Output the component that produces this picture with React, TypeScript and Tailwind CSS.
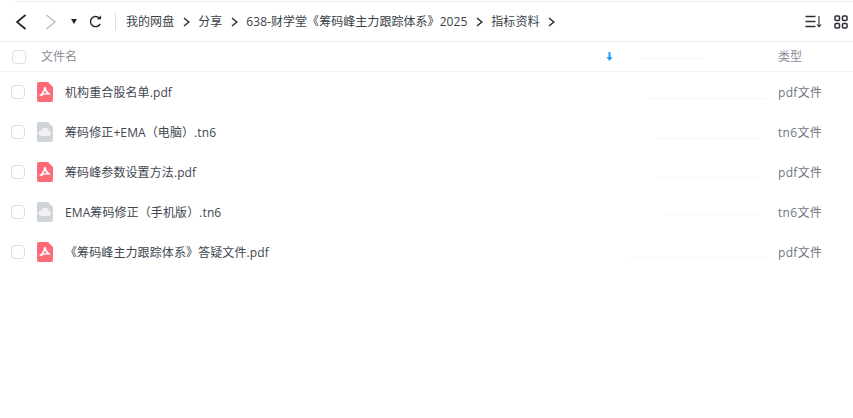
const FONT = "font-['Open_Sans','Noto_Sans_CJK_SC',sans-serif]";

type FileRow = { name: string; kind: "pdf" | "tn6"; smudge: string };

const FILES: FileRow[] = [
  { name: "机构重合股名单.pdf", kind: "pdf", smudge: "w-[118px] ml-[648px] top-[26px]" },
  { name: "筹码修正+EMA（电脑）.tn6", kind: "tn6", smudge: "w-[104px] ml-[656px] top-[26px]" },
  { name: "筹码峰参数设置方法.pdf", kind: "pdf", smudge: "w-[104px] ml-[656px] top-[25px]" },
  { name: "EMA筹码修正（手机版）.tn6", kind: "tn6", smudge: "w-[96px] ml-[664px] top-[22px]" },
  { name: "《筹码峰主力跟踪体系》答疑文件.pdf", kind: "pdf", smudge: "w-[138px] ml-[630px] top-[25px]" },
];

function PdfIcon() {
  return (
    <svg width="16" height="20" viewBox="0 0 16 20" className="block">
      <path d="M2 0h9l5 5v13a2 2 0 0 1-2 2H2a2 2 0 0 1-2-2V2a2 2 0 0 1 2-2z" fill="#fd6a7a" />
      <path
        d="M7.800 5.500c.6 2.800 1.800 4.800 4.200 6.500M7.800 5.500c-.2 3-1.500 5.500-4.500 8M4 13.300c2.500-1.500 5-2 8.500-1.300"
        fill="none"
        stroke="#fff"
        strokeWidth="1.600"
        strokeLinecap="round"
      />
    </svg>
  );
}

function CloudFileIcon() {
  return (
    <svg width="16" height="20" viewBox="0 0 16 20" className="block">
      <path d="M2 0h9l5 5v13a2 2 0 0 1-2 2H2a2 2 0 0 1-2-2V2a2 2 0 0 1 2-2z" fill="#cfd3da" />
      <path
        d="M4.500 14a2.600 2.600 0 0 1-.4-5.200 4 4 0 0 1 7.700-.1 2.700 2.700 0 0 1 .2 5.300z"
        fill="#f1f2f4"
      />
    </svg>
  );
}

function Chevron() {
  return (
    <svg width="7" height="10" viewBox="0 0 7 10" className="mx-[8.500px]" fill="none" stroke="#2b2f36" strokeWidth="1.500">
      <path d="M1 1l4.800 4L1 9" />
    </svg>
  );
}

function Checkbox() {
  return <span className="block w-[14px] h-[14px] rounded-[4px] border border-[#dcdfe3] bg-white shrink-0" />;
}

export default function App() {
  const crumbs = ["我的网盘", "分享", "638-财学堂《筹码峰主力跟踪体系》2025", "指标资料"];

  return (
    <div className={`${FONT} w-[853px] h-[418px] bg-white overflow-hidden text-[#3f4550]`}>
      <div className="ml-[15px] h-[1px] mt-[1px] bg-[#eeeeee]" />

      {/* Toolbar */}
      <div className="h-[39px] flex items-center border-b border-[#eeeeee] box-content">
        <svg width="12" height="16" viewBox="0 0 12 16" className="ml-[15px]" fill="none" stroke="#22262c" strokeWidth="1.700">
          <path d="M10.500 1L2 8l8.500 7" />
        </svg>
        <svg width="12" height="16" viewBox="0 0 12 16" className="ml-[18px]" fill="none" stroke="#b9bcc1" strokeWidth="1.400">
          <path d="M1.500 1L10 8l-8.500 7" />
        </svg>
        <svg width="6" height="5" viewBox="0 0 6 5" className="ml-[14px]">
          <path d="M0 0h6L3 5z" fill="#22262c" />
        </svg>
        <svg width="13" height="13" viewBox="0 0 14 14" className="ml-[12px]" fill="none" stroke="#22262c" strokeWidth="1.500">
          <path d="M12 9.500A5.500 5.500 0 1 1 10.800 3" />
          <path d="M12.500 .8v3.400H9" fill="#22262c" strokeWidth="1" />
        </svg>
        <span className="ml-[13px] w-[1px] h-[17px] bg-[#dddddd]" />
        <div className="ml-[10px] flex items-center text-[12px] tracking-[0.05px] text-[#3a3f47] whitespace-nowrap">
          {crumbs.map((c) => (
            <div key={c} className="flex items-center">
              <span>{c}</span>
              <Chevron />
            </div>
          ))}
        </div>
        <div className="ml-auto mr-[5px] flex items-center gap-[12px]">
          <svg width="17" height="13" viewBox="0 0 16 13" fill="none" stroke="#2b2f36" strokeWidth="1.400">
            <path d="M0 1.500h10M0 6.500h10M0 11.500h10" />
            <path d="M13.500 1v10.500M11.500 9.500l2 2.200 2-2.200" strokeWidth="1.100" />
          </svg>
          <svg width="14" height="14" viewBox="0 0 14 14" fill="none" stroke="#2b2f36" strokeWidth="1.500">
            <rect x="1" y="1" width="4.500" height="4.500" rx="1" />
            <rect x="8.500" y="1" width="4.500" height="4.500" rx="1" />
            <rect x="1" y="8.500" width="4.500" height="4.500" rx="1" />
            <rect x="8.500" y="8.500" width="4.500" height="4.500" rx="1" />
          </svg>
        </div>
      </div>

      {/* Column header */}
      <div className="relative h-[30px] flex items-center border-b border-[#f3f3f3] text-[12px] text-[#8a8e95]">
        <span className="ml-[12px]"><Checkbox /></span>
        <span className="ml-[15px]">文件名</span>
        <svg width="7" height="9" viewBox="0 0 6 9" className="ml-[529px]">
          <path d="M2 0h2v5h2L3 9 0 5h2z" fill="#1e9dfa" />
        </svg>
        <span className="ml-[165px]">类型</span>
        <span className="absolute left-[640px] top-[16px] w-[64px] h-[1px] bg-[#f6f6f6]" />
      </div>

      {/* File rows */}
      {FILES.map((f) => (
        <div key={f.name} className="relative h-[40px] flex items-center text-[12px]">
          <span className="ml-[11px]"><Checkbox /></span>
          <span className="ml-[12px]">{f.kind === "pdf" ? <PdfIcon /> : <CloudFileIcon />}</span>
          <span className="ml-[12px] pt-[2px] text-[#41464f] tracking-[0.1px] whitespace-nowrap">{f.name}</span>
          <span className="absolute left-[778px] top-[11.500px] text-[#6f747c] tracking-[0.3px]">{f.kind}文件</span>
          <span className={`absolute left-0 h-[1px] bg-[#f6f6f6] ${f.smudge}`} />
        </div>
      ))}
    </div>
  );
}
